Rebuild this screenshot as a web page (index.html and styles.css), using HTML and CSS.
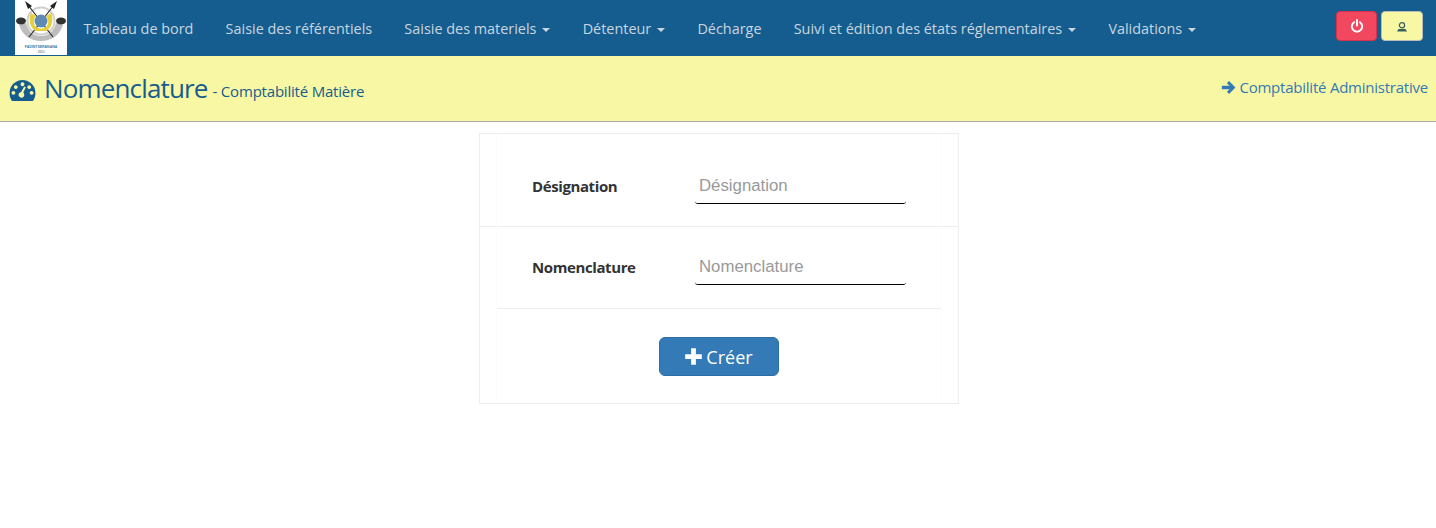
FILE: index.html
```html
<!DOCTYPE html>
<html lang="fr">
<head>
<meta charset="utf-8">
<title>Nomenclature</title>
<link rel="stylesheet" href="styles.css">
</head>
<body>
<nav class="navbar">
  <div class="logo">
    <svg viewBox="0 0 52 55" width="52" height="55">
      <path d="M4 25 C8 36 16 41 26 41 C36 41 44 36 48 25 L41 23 C39 32 33 36 26 36 C19 36 13 32 11 23Z" fill="#bdbdbd"/>
      <ellipse cx="6" cy="21" rx="5" ry="3.400" fill="#333"/>
      <ellipse cx="46" cy="21" rx="5" ry="3.400" fill="#333"/>
      <circle cx="26" cy="21" r="13.500" fill="none" stroke="#cfcfcf" stroke-width="2"/>
      <path d="M13 5 L38 37 M39 5 L14 37" stroke="#2a2a2a" stroke-width="1.200"/>
      <path d="M10 1 L17 6 L13 9Z M42 1 L35 6 L39 9Z" fill="#222"/>
      <path d="M16 13 L21 16 C18 19 18 24 21 27 L26 29 L31 27 C34 24 34 19 31 16 L36 13 C39 20 37 28 31 31 H21 C15 28 13 20 16 13Z" fill="#e6cf3a"/>
      <circle cx="26" cy="21" r="6.500" fill="#5f8ab3"/>
      <text x="26" y="47.500" class="logo-name" text-anchor="middle">FADINTSERANANA</text>
      <text x="26" y="53" class="logo-year" text-anchor="middle">- 1820 -</text>
    </svg>
  </div>
  <ul class="menu">
    <li class="item">Tableau de bord</li>
    <li class="item">Saisie des référentiels</li>
    <li class="item">Saisie des materiels<span class="caret"></span></li>
    <li class="item">Détenteur<span class="caret"></span></li>
    <li class="item">Décharge</li>
    <li class="item">Suivi et édition des états réglementaires<span class="caret"></span></li>
    <li class="item">Validations<span class="caret"></span></li>
  </ul>
  <div class="nav-actions">
    <button class="btn-power" aria-label="Déconnexion">
      <svg viewBox="0 0 14 14" width="14" height="14">
        <path d="M4 3.200 A5.200 5.200 0 1 0 10 3.200" fill="none" stroke="#fff" stroke-width="2" stroke-linecap="round"/>
        <path d="M7 1 V6.500" stroke="#fff" stroke-width="2" stroke-linecap="round"/>
      </svg>
    </button>
    <button class="btn-user" aria-label="Utilisateur">
      <svg viewBox="0 0 12 12" width="12" height="12">
        <circle cx="6" cy="4.200" r="2.600" fill="none" stroke="#35605c" stroke-width="1.200"/>
        <path d="M1 10.500 L2.500 8 H9.500 L11 10.500Z" fill="#35605c"/>
      </svg>
    </button>
  </div>
</nav>
<header class="subhead">
  <h1 class="title">
    <svg class="gauge" viewBox="0 0 28 24" width="27" height="23">
      <path fill-rule="evenodd" fill="#155d8e" d="M14 1 A13.500 13.500 0 0 1 27.500 14.500 C27.500 18 26.500 20.800 24.800 23 H3.200 C1.500 20.800 .5 18 .5 14.500 A13.500 13.500 0 0 1 14 1Z M14 3.500 a2 2 0 1 0 .01 0Z M7 6.500 a2 2 0 1 0 .01 0Z M21 6.500 a2 2 0 1 0 .01 0Z M4.500 12.500 a2 2 0 1 0 .01 0Z M23.500 12.500 a2 2 0 1 0 .01 0Z M17.500 8.500 L14.800 14.200 A3 3 0 1 1 12.600 13.500 L15.800 7.800Z"/>
    </svg>
    <span class="title-main">Nomenclature</span>
    <small class="title-sub">- Comptabilité Matière</small>
  </h1>
  <a class="switch" href="#">
    <svg viewBox="0 0 14 14" width="15" height="15">
      <path d="M7.500 1 L13.500 7 L7.500 13 L5.500 11 L8 8.700 H.8 V5.300 H8 L5.500 3Z" fill="#337ab7"/>
    </svg>
    Comptabilité Administrative
  </a>
</header>
<main class="content">
  <form class="card">
    <div class="row">
      <label class="label">Désignation</label>
      <div class="field"><input class="input" type="text" placeholder="Désignation"></div>
    </div>
    <div class="row">
      <label class="label">Nomenclature</label>
      <div class="field"><input class="input" type="text" placeholder="Nomenclature"></div>
    </div>
    <div class="actions">
      <button class="btn-create" type="button">
        <svg viewBox="0 0 16 16" width="19" height="19"><path d="M6 1 H10 V6 H15 V10 H10 V15 H6 V10 H1 V6 H6Z" fill="#fff"/></svg>
        Créer
      </button>
    </div>
  </form>
</main>
</body>
</html>
```

FILE: styles.css
```css
* { box-sizing: border-box; }
html, body { margin: 0; padding: 0; }
body {
  background: #fff;
  font-family: "Open Sans", "Liberation Sans", sans-serif;
  color: #333;
  height: 528px;
  overflow: hidden;
}
.navbar {
  height: 56px;
  background: #155d8e;
  display: flex;
  align-items: flex-start;
  padding-left: 15px;
}
.logo {
  width: 52px;
  height: 55px;
  background: #fff;
  flex: none;
}
.logo svg { display: block; }
.logo-name { font: bold 3.500px "Liberation Sans", sans-serif; fill: #3a7ba8; }
.logo-year { font: 3px "Liberation Sans", sans-serif; fill: #555; }
.menu {
  list-style: none;
  margin: 0 0 0 0.400px;
  padding: 0;
  display: flex;
}
.item {
  padding: 0 16.100px;
  line-height: 57px;
  font-size: 14.400px;
  letter-spacing: 0.010px;
  color: #c9d6e0;
  white-space: nowrap;
}
.caret {
  display: inline-block;
  margin-left: 6px;
  vertical-align: middle;
  border-top: 4px solid #c9d6e0;
  border-left: 4px solid transparent;
  border-right: 4px solid transparent;
}
.nav-actions {
  margin-left: auto;
  margin-right: 13px;
  margin-top: 11px;
  display: flex;
  gap: 4px;
}
.nav-actions button {
  height: 30px;
  padding: 0;
  display: flex;
  align-items: center;
  justify-content: center;
  border-radius: 4px;
}
.btn-power {
  width: 41px;
  background: #f1485f;
  border: 1px solid #d9304a;
}
.btn-user {
  width: 42px;
  background: #f8f7a3;
  border: 1px solid #bbb;
}
.btn-user svg { margin-top: 2px; }
.subhead {
  height: 66px;
  background: #f8f7a3;
  border-bottom: 1px solid #aaa;
  display: flex;
  justify-content: space-between;
  align-items: flex-start;
  padding: 0 8px 0 9px;
}
.title {
  margin: 0;
  font-weight: 400;
  display: flex;
  align-items: baseline;
  color: #155d8e;
  padding-top: 14px;
}
.gauge { align-self: center; margin-right: 8px; margin-top: 4px; }
.title-main { font-size: 26px; letter-spacing: -0.850px; line-height: 36px; }
.title-sub { font-size: 15px; margin-left: 5px; letter-spacing: -0.200px; position: relative; top: -1px; }
.switch {
  margin-top: 21px;
  display: flex;
  align-items: center;
  gap: 3px;
  font-size: 15px;
  line-height: 20px;
  letter-spacing: -0.230px;
  color: #337ab7;
  text-decoration: none;
}
.content {
  display: flex;
  justify-content: center;
  padding: 11px 0 0 2px;
}
.card {
  position: relative;
  width: 480px;
  height: 271px;
  border: 1px solid #eee;
  display: flex;
  flex-direction: column;
  align-items: stretch;
}
.card::before {
  content: "";
  position: absolute;
  top: 0;
  bottom: 0;
  left: 16px;
  right: 16px;
  border-left: 1px solid #fcfcfc;
  border-right: 1px solid #fcfcfc;
  pointer-events: none;
}
.row {
  height: 93px;
  display: flex;
  align-items: center;
  padding: 12px 0 0 52px;
  border-bottom: 1px solid #eee;
}
.row + .row {
  height: 82px;
  margin: 0 16px;
  padding: 0 0 0 36px;
}
.row + .row .label { margin-bottom: 2px; }
.label {
  width: 163px;
  font-size: 15px;
  font-weight: 700;
  letter-spacing: -0.400px;
  color: #333;
}
.field { padding-bottom: 2px; }
.input {
  display: block;
  width: 211px;
  height: 37px;
  padding: 2px 4px 0;
  border: 0;
  border-bottom: 1px solid #000;
  border-radius: 0 0 3px 3px;
  outline: none;
  background: transparent;
  font: 16.800px "Liberation Sans", sans-serif;
  color: #333;
}
.input::placeholder { color: #999; opacity: 1; }
.actions {
  display: flex;
  justify-content: center;
  padding-top: 28px;
}
.btn-create {
  width: 120px;
  height: 39px;
  padding: 0 1px 0 0;
  display: flex;
  align-items: center;
  justify-content: center;
  gap: 3px;
  background: #337ab7;
  border: 1px solid #2e6da4;
  border-radius: 6px;
  color: #fff;
  font: 18px "Open Sans", sans-serif;
}
```
